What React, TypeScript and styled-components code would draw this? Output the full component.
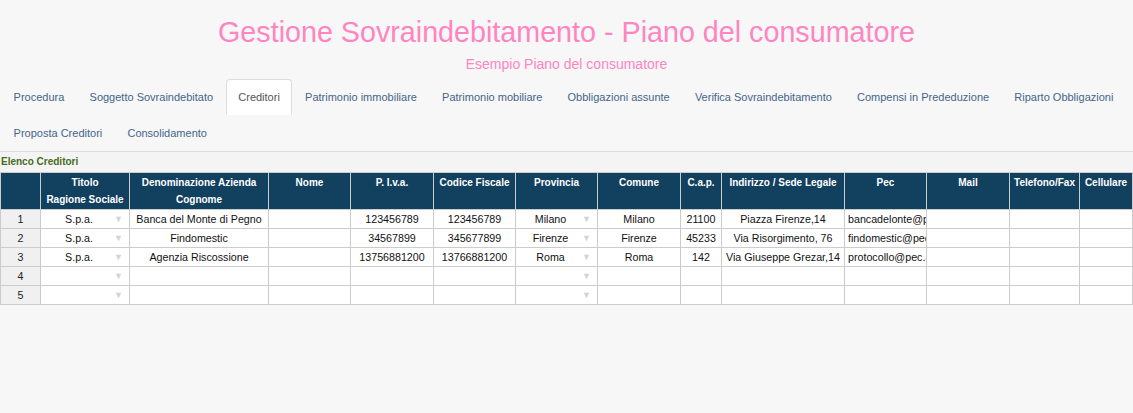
import React from "react";
import styled, { createGlobalStyle } from "styled-components";

const GlobalStyle = createGlobalStyle`
  body {
    margin: 0;
    background: #f7f7f7;
    font-family: "Liberation Sans", Arial, sans-serif;
  }
`;

const Page = styled.div`
  width: 1133px;
`;

const Header = styled.header`
  text-align: center;
  padding-top: 16px;
`;

const Title = styled.h1`
  margin: 0;
  font-size: 28.7px;
  line-height: 33px;
  font-weight: normal;
  color: #ff85c1;
`;

const Subtitle = styled.h2`
  margin: 7px 0 0;
  font-size: 14px;
  line-height: 16px;
  font-weight: normal;
  color: #ff85c1;
`;

const TabBar = styled.ul`
  display: flex;
  flex-wrap: wrap;
  list-style: none;
  margin: 7px 0 0;
  padding: 0 0 0 1px;
  border-bottom: 1px solid #dddddd;
`;

const Tab = styled.li<{ $active?: boolean }>`
  padding: 9px 11.6px;
  line-height: 16px;
  font-size: 11px;
  border: 1px solid ${(p) => (p.$active ? "#dddddd" : "transparent")};
  border-bottom-color: transparent;
  border-radius: 4px 4px 0 0;
  background: ${(p) => (p.$active ? "#ffffff" : "transparent")};
  color: ${(p) => (p.$active ? "#555555" : "#44658a")};
  cursor: pointer;
`;

const SectionLabel = styled.div`
  height: 20px;
  line-height: 19px;
  padding-left: 1px;
  background: #f4f4f4;
  font-size: 10px;
  font-weight: bold;
  color: #4a6a1c;
`;

const Grid = styled.div`
  display: grid;
  grid-template-columns: 40px 89px 139px 82px 83px 82px 82px 83px 41px 123px 82px 83px 70px 53px;
  border-left: 1px solid #cccccc;
  border-top: 1px solid #cccccc;
  font-size: 10.7px;
`;

const HeadCell = styled.div`
  box-sizing: border-box;
  height: 37px;
  padding: 1px 2px 0;
  background: #12405f;
  color: #ffffff;
  font-size: 10px;
  font-weight: bold;
  line-height: 17px;
  text-align: center;
  white-space: nowrap;
  overflow: hidden;
  border-right: 1px solid #cccccc;
  border-bottom: 1px solid #cccccc;
`;

const Cell = styled.div<{ $align?: "left" | "center" }>`
  box-sizing: border-box;
  height: 19px;
  padding: 0 3px;
  background: #ffffff;
  color: #111111;
  line-height: 18px;
  text-align: ${(p) => p.$align ?? "center"};
  white-space: nowrap;
  overflow: hidden;
  border-right: 1px solid #cccccc;
  border-bottom: 1px solid #cccccc;
`;

const RowHead = styled(Cell)`
  background: #f0f0f0;
  color: #222222;
`;

const SelectCell = styled(Cell)`
  display: flex;
  padding-right: 6px;
`;

const SelectValue = styled.span`
  flex: 1;
  text-align: center;
  overflow: hidden;
`;

const Arrow = styled.span`
  width: 9px;
  font-size: 9px;
  color: #d4d4d4;
  text-align: center;
`;

const tabs = [
  "Procedura",
  "Soggetto Sovraindebitato",
  "Creditori",
  "Patrimonio immobiliare",
  "Patrimonio mobiliare",
  "Obbligazioni assunte",
  "Verifica Sovraindebitamento",
  "Compensi in Prededuzione",
  "Riparto Obbligazioni",
  "Proposta Creditori",
  "Consolidamento",
];

const headers = [
  "",
  "Titolo\nRagione Sociale",
  "Denominazione Azienda\nCognome",
  "Nome",
  "P. I.v.a.",
  "Codice Fiscale",
  "Provincia",
  "Comune",
  "C.a.p.",
  "Indirizzo / Sede Legale",
  "Pec",
  "Mail",
  "Telefono/Fax",
  "Cellulare",
];

interface Creditore {
  titolo: string;
  denominazione: string;
  nome: string;
  piva: string;
  cf: string;
  provincia: string;
  comune: string;
  cap: string;
  indirizzo: string;
  pec: string;
  mail: string;
  telefono: string;
  cellulare: string;
}

const empty: Creditore = {
  titolo: "",
  denominazione: "",
  nome: "",
  piva: "",
  cf: "",
  provincia: "",
  comune: "",
  cap: "",
  indirizzo: "",
  pec: "",
  mail: "",
  telefono: "",
  cellulare: "",
};

const creditori: Creditore[] = [
  {
    ...empty,
    titolo: "S.p.a.",
    denominazione: "Banca del Monte di Pegno",
    piva: "123456789",
    cf: "123456789",
    provincia: "Milano",
    comune: "Milano",
    cap: "21100",
    indirizzo: "Piazza Firenze,14",
    pec: "bancadelonte@pec.it",
  },
  {
    ...empty,
    titolo: "S.p.a.",
    denominazione: "Findomestic",
    piva: "34567899",
    cf: "345677899",
    provincia: "Firenze",
    comune: "Firenze",
    cap: "45233",
    indirizzo: "Via Risorgimento, 76",
    pec: "findomestic@pec.it",
  },
  {
    ...empty,
    titolo: "S.p.a.",
    denominazione: "Agenzia Riscossione",
    piva: "13756881200",
    cf: "13766881200",
    provincia: "Roma",
    comune: "Roma",
    cap: "142",
    indirizzo: "Via Giuseppe Grezar,14",
    pec: "protocollo@pec.agenziariscossione.gov.it",
  },
  { ...empty },
  { ...empty },
];

const Select = ({ value }: { value: string }) => (
  <SelectCell>
    <SelectValue>{value}</SelectValue>
    <Arrow>▼</Arrow>
  </SelectCell>
);

export default function App() {
  return (
    <Page>
      <GlobalStyle />
      <Header>
        <Title>Gestione Sovraindebitamento - Piano del consumatore</Title>
        <Subtitle>Esempio Piano del consumatore</Subtitle>
      </Header>
      <TabBar>
        {tabs.map((t) => (
          <Tab key={t} $active={t === "Creditori"}>
            {t}
          </Tab>
        ))}
      </TabBar>
      <SectionLabel>Elenco Creditori</SectionLabel>
      <Grid>
        {headers.map((h, i) => (
          <HeadCell key={i}>
            {h.split("\n").map((line) => (
              <div key={line}>{line}</div>
            ))}
          </HeadCell>
        ))}
        {creditori.map((c, i) => (
          <React.Fragment key={i}>
            <RowHead>{i + 1}</RowHead>
            <Select value={c.titolo} />
            <Cell>{c.denominazione}</Cell>
            <Cell>{c.nome}</Cell>
            <Cell>{c.piva}</Cell>
            <Cell>{c.cf}</Cell>
            <Select value={c.provincia} />
            <Cell>{c.comune}</Cell>
            <Cell>{c.cap}</Cell>
            <Cell>{c.indirizzo}</Cell>
            <Cell $align="left">{c.pec}</Cell>
            <Cell>{c.mail}</Cell>
            <Cell>{c.telefono}</Cell>
            <Cell>{c.cellulare}</Cell>
          </React.Fragment>
        ))}
      </Grid>
    </Page>
  );
}
